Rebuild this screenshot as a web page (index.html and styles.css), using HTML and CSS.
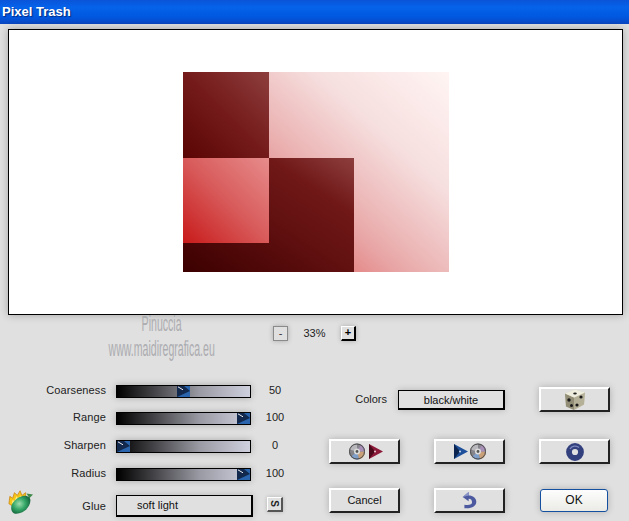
FILE: index.html
```html
<!DOCTYPE html>
<html lang="en">
<head>
<meta charset="utf-8">
<title>Pixel Trash</title>
<link rel="stylesheet" href="styles.css">
</head>
<body>
<div class="window">
  <header class="titlebar">Pixel Trash</header>
  <section class="preview">
    <div class="art">
      <div class="sq sq-tl"></div>
      <div class="sq sq-dark"></div>
      <div class="sq sq-red"></div>
    </div>
  </section>
  <div class="watermark"><span>Pinuccia</span><span>www.maidiregrafica.eu</span></div>
  <div class="zoom">
    <button class="zbtn zbtn-minus">-</button>
    <span class="zval">33%</span>
    <button class="zbtn zbtn-plus">+</button>
  </div>
  <main class="panel">
    <div class="sliders">
      <div class="label">Coarseness</div>
      <div class="track"><svg class="thumb" style="--v:50" viewBox="0 0 13 13" preserveAspectRatio="none"><use href="#thumb"/></svg></div>
      <div class="val">50</div>
      <div class="label">Range</div>
      <div class="track"><svg class="thumb" style="--v:100" viewBox="0 0 13 13" preserveAspectRatio="none"><use href="#thumb"/></svg></div>
      <div class="val">100</div>
      <div class="label">Sharpen</div>
      <div class="track"><svg class="thumb" style="--v:0" viewBox="0 0 13 13" preserveAspectRatio="none"><use href="#thumb"/></svg></div>
      <div class="val">0</div>
      <div class="label">Radius</div>
      <div class="track"><svg class="thumb" style="--v:100" viewBox="0 0 13 13" preserveAspectRatio="none"><use href="#thumb"/></svg></div>
      <div class="val">100</div>
      <div class="label label-glue">
        <svg class="logo" viewBox="0 0 28 28">
          <defs>
            <radialGradient id="mango" cx="0.42" cy="0.45" r="0.7">
              <stop offset="0" stop-color="#9fdcae"/>
              <stop offset="0.45" stop-color="#35a868"/>
              <stop offset="1" stop-color="#0b4f30"/>
            </radialGradient>
          </defs>
          <path d="M1 17 L2 9 L5 11 L7 5 L10 8 L13 3 L15 8 L19 5 L19 12 L6 20 Z" fill="#f5c518" stroke="#c9820f" stroke-width="0.8"/>
          <path d="M4 17 L5 13 L7 14 L9 9 L11 11 L14 8 L15 11 L10 17 Z" fill="#fdeb80"/>
          <path d="M20 6 L27 7 L23 11 Z" fill="#3f8a4a"/>
          <path d="M5 26 C1 21 5 14 12 10 C17 7 23 8 24 12 C25 18 20 25 13 27 C9 28 7 28 5 26 Z" fill="url(#mango)"/>
        </svg>
        <span>Glue</span>
      </div>
      <div class="display display-glue">soft light</div>
      <div class="val val-s"><button class="sbtn"><span>S</span></button></div>
    </div>
    <div class="actions">
      <div class="colors">
        <span class="colors-label">Colors</span>
        <div class="display display-colors">black/white</div>
      </div>
      <button class="btn">
        <svg class="ico" width="22" height="23" viewBox="0 0 22 22">
          <path d="M1 5 L11 1 L21 4 L20 16 L10 21.5 L2 18 Z" fill="#cfcbb4"/>
          <path d="M1 5 L10 9 L10 21.5 L2 18 Z" fill="#918d76"/>
          <path d="M10 9 L21 4 L20 16 L10 21.5 Z" fill="#b5b199"/>
          <path d="M1 5 L11 1 L21 4 L10 9 Z" fill="#efedde"/>
          <ellipse cx="11" cy="5" rx="1.8" ry="1.1" fill="#222"/>
          <circle cx="5" cy="11.5" r="1.7" fill="#1a1a1a"/>
          <circle cx="7.5" cy="17" r="1.5" fill="#1a1a1a"/>
          <circle cx="17" cy="8.5" r="1.6" fill="#1a1a1a"/>
          <circle cx="13" cy="16.5" r="1.6" fill="#1a1a1a"/>
        </svg>
      </button>
      <button class="btn">
        <svg class="ico ico-save" width="34" height="17" viewBox="0 0 34 17">
          <use href="#cd" x="0" y="0"/>
          <path d="M20 1 L34 8.5 L20 16 Z" fill="#8a1a38"/>
          <path d="M20 1 L26 8.5 L20 16 Z" fill="#4a0a1c"/>
          <circle cx="26" cy="8.5" r="1" fill="#f0d0d8"/>
        </svg>
      </button>
      <button class="btn">
        <svg class="ico" width="32" height="17" viewBox="0 0 32 17">
          <path d="M0 1 L14 8.5 L0 16 Z" fill="#1d4f9a"/>
          <path d="M0 1 L6 8.5 L0 16 Z" fill="#0b2450"/>
          <circle cx="6" cy="8.5" r="1" fill="#d0e0f5"/>
          <use href="#cd" x="16" y="0"/>
        </svg>
      </button>
      <button class="btn">
        <svg class="ico" width="18" height="18" viewBox="0 0 18 18">
          <circle cx="9" cy="9" r="6" fill="none" stroke="#33407e" stroke-width="5.8"/>
          <path d="M4 6 A6 6 0 0 1 13 4.5" fill="none" stroke="#7e8ac0" stroke-width="1.4"/>
        </svg>
      </button>
      <button class="btn">Cancel</button>
      <button class="btn">
        <svg class="ico" width="15" height="17" viewBox="0 0 16 20">
          <path d="M7 0 L0 6 L7 11 L7 8 C10 8 11 10 11 12 C11 14.5 8 16 2 15 L2 19 C10 20 16 17 16 11.5 C16 7 12 4 7 4 Z" fill="#4d5aa0"/>
          <path d="M7 0 L0 6 L7 4 Z" fill="#8a94c8"/>
        </svg>
      </button>
      <button class="btn btn-ok">OK</button>
    </div>
  </main>
</div>
<svg class="defs" width="0" height="0">
  <defs>
    <g id="thumb">
      <rect width="13" height="13" fill="#2a64ad"/>
      <path d="M0 0 H7 L13 6 L0 13 Z" fill="#12284c"/>
      <path d="M1 1 L6 4.5" stroke="#fff" stroke-width="1"/>
    </g>
    <g id="cd">
      <circle cx="8" cy="8.5" r="8" fill="#85858b"/>
      <path d="M8 8.5 L16 8.5 A8 8 0 0 1 10 16.2 Z" fill="#c9a078"/>
      <path d="M8 8.5 L10 16.2 A8 8 0 0 1 2 13.8 Z" fill="#7f9fc8"/>
      <path d="M8 8.5 L0.2 6.5 A8 8 0 0 1 8 0.5 Z" fill="#b8b8bc"/>
      <path d="M8 8.5 L12 1.5 A8 8 0 0 1 16 8.5 Z" fill="#a890b8"/>
      <circle cx="8" cy="8.5" r="7.5" fill="none" stroke="#4a4a4a" stroke-width="1"/>
      <circle cx="8" cy="8.5" r="3" fill="#dcdcdc"/>
      <circle cx="8" cy="8.5" r="1.4" fill="#555"/>
    </g>
  </defs>
</svg>
</body>
</html>
```
FILE: styles.css
```css
* { box-sizing: border-box; }
html, body { margin: 0; padding: 0; }
body { width: 629px; height: 521px; overflow: hidden; background: #e0e0e0; font-family: "Liberation Sans", Arial, sans-serif; color: #111; }
.defs { position: absolute; }
.window { position: relative; width: 629px; height: 521px; background: #e0e0e0; }
.titlebar {
  height: 24px; padding: 4px 0 0 2px;
  background: linear-gradient(#0a54d8 0, #0563ea 30%, #0058e0 70%, #0a46c0 100%);
  color: #fff; font-weight: bold; font-size: 13px; line-height: 16px;
  text-shadow: 1px 1px 1px #002a80;
}
.preview {
  margin: 5px 6px 0 8px; height: 286px;
  background: #fff; border: 1.5px solid #000;
  box-shadow: 0 0 8px rgba(0,0,0,.28);
  display: flex; justify-content: center;
  padding: 41.5px 0 0 0;
}
.art {
  width: 266px; height: 200px;
  margin-left: 1px;
  display: grid;
  grid-template-columns: 86px 85px 95px;
  grid-template-rows: 86px 85px 29px;
  background: linear-gradient(42deg, #e58a8a 35%, #e8a4a4 44%, #ebb2b2 50%, #f0c6c6 60%, #f6dede 72%, #fff5f3 100%);
}
.sq-tl { grid-column: 1; grid-row: 1; background: linear-gradient(to top right, #5a0505, #741a1a 50%, #8e3e3e); }
.sq-dark { grid-column: 1 / 3; grid-row: 2 / 4; background: linear-gradient(to top right, #3c0000 0%, #621010 50%, #701818 75%, #8e3e3e 100%); }
.sq-red { grid-column: 1; grid-row: 2; background: linear-gradient(to top right, #c81a1a, #d85a5a 50%, #e78c8c); }
.watermark {
  position: absolute; left: 100px; top: 311px; width: 124px;
  display: flex; flex-direction: column; align-items: center;
  color: #acacb0; font-size: 22px; line-height: 25px; pointer-events: none;
}
.watermark span { transform: scaleX(.48); white-space: nowrap; }
.zoom { display: flex; align-items: center; margin: 10px 0 0 273px; height: 16px; font-size: 11px; }
.zbtn {
  width: 15px; height: 15px; padding: 0; font: 11px/11px "Liberation Sans", sans-serif; color: #333;
  background: #e0e0e0; box-shadow: 0 0 5px rgba(0,0,0,.25);
}
.zbtn-minus { border: 1px solid #8a8a8a; }
.zbtn-plus { border: 1px solid #000; border-left-color: #fff; border-top-color: #fff; border-right-width: 2px; border-bottom-width: 2px; font-weight: bold; color: #000; }
.zval { width: 53px; text-align: center; font-size: 11px; color: #222; }
.panel { display: flex; margin-top: 44px; height: 136px; }
.sliders {
  width: 329px;
  display: grid;
  grid-template-columns: 106px 136px 26px;
  column-gap: 10px;
  grid-template-rows: 27px 28px 28px 27px 22px;
  align-content: start;
}
.label { text-align: right; font-size: 11px; letter-spacing: .1px; line-height: 11px; color: #222; }
.label-glue { display: flex; justify-content: space-between; align-items: center; padding-left: 8px; height: 22px; }
.logo { width: 26px; height: 26px; align-self: flex-start; margin-top: -7px; }
.track {
  position: relative; width: 135px; height: 13px;
  border: 1px solid #000;
  background: linear-gradient(to right, #000 0, #55555a 35%, #9a9aa4 62%, #cfd0de 100%);
  box-shadow: 0 0 7px rgba(0,0,0,.25);
}
.thumb { position: absolute; top: 0; width: 13px; height: 11px; left: calc((100% - 13px) * var(--v) / 100); }
.val { font-size: 11px; line-height: 11px; height: 11px; color: #222; display: flex; justify-content: center; align-items: center; white-space: nowrap; }
.val-s { height: 18px; }
.display {
  background: #e0e0e0; font-size: 11px; color: #111;
  border: 1px solid #000; border-right-width: 2px; border-bottom-width: 2px;
  box-shadow: 0 0 7px rgba(0,0,0,.2);
}
.display-glue { width: 137px; height: 22px; line-height: 19px; padding-left: 20px; }
.display-colors { width: 107px; height: 20px; line-height: 18px; text-align: center; }
.sbtn { flex: none; width: 16px; height: 15px; padding: 0; background: #e0e0e0; border: 1px solid #555; border-top-color: #fff; border-left-color: #fff; border-right-width: 2px; border-bottom-width: 2px; font: bold 10px/11px "Liberation Sans", sans-serif; color: #222; box-shadow: 0 0 4px rgba(0,0,0,.2); }
.sbtn span { display: block; transform: rotate(90deg); }
.actions {
  margin-top: 2px;
  display: grid;
  grid-template-columns: 71px 71px 71px;
  column-gap: 34px;
  grid-template-rows: 52px 49px 25px;
  align-content: start;
}
.colors { grid-column: 1 / 3; display: flex; justify-content: flex-end; align-items: flex-start; gap: 11px; padding-top: 3px; font-size: 11px; }
.colors-label { color: #222; font-size: 11px; line-height: 18px; }
.btn {
  height: 25px; padding: 0; background: #e0e0e0; font: 11px/13px "Liberation Sans", sans-serif; color: #111;
  border: 1px solid #222; border-top: 2px solid #fff; border-left: 2px solid #fff; border-right-width: 2px; border-bottom-width: 2px;
  box-shadow: 0 0 7px rgba(0,0,0,.22);
  display: flex; align-items: center; justify-content: center;
}
.btn-ok {
  width: 68px; height: 23px; margin: 1px 0 0 1px;
  background: linear-gradient(#fdfdfd, #ebebe6); border: 1.5px solid #14509f; border-radius: 3px; font-size: 12px;
}
.ico { display: block; }
.ico-save { margin-left: 3px; }
```
